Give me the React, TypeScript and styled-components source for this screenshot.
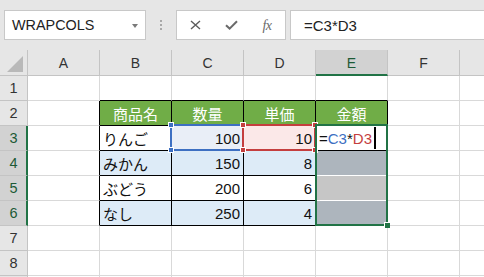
import React from 'react';
import styled, { createGlobalStyle } from 'styled-components';

const GRID = '#d9d9d9';
const INK = '#000';
const HEAD_LINE = '#c4c4c4';
const SEL_GREEN = '#217346';
const REF_BLUE = '#3d6fc2';
const REF_RED = '#c43e3e';
const LIGHT_BLUE = '#ddebf7';
const TABLE_GREEN = '#70ad47';

const Global = createGlobalStyle`
  html, body { margin: 0; padding: 0; background: #fff; }
  body {
    width: 484px;
    height: 277px;
    overflow: hidden;
    font-family: "Liberation Sans", "Noto Sans CJK JP", sans-serif;
  }
`;

const Page = styled.div`
  display: flex;
  flex-direction: column;
  width: 484px;
  height: 277px;
  overflow: hidden;
  background: #fff;
`;

/* ---------- formula toolbar ---------- */

const Toolbar = styled.div`
  display: flex;
  align-items: flex-start;
  flex: 0 0 50px;
  box-sizing: border-box;
  padding: 10px 0 0 4px;
  background: #e6e6e6;
`;

const NameBox = styled.div`
  display: flex;
  align-items: center;
  justify-content: space-between;
  flex: 0 0 142px;
  height: 30px;
  box-sizing: border-box;
  padding: 0 7px 0 7px;
  background: #fff;
  border: 1px solid #c8c8c8;
  font-size: 14.4px;
  color: #222;
`;

const DropArrow = styled.span`
  width: 0;
  height: 0;
  border-left: 3.5px solid transparent;
  border-right: 3.5px solid transparent;
  border-top: 4px solid #7a7a7a;
  margin-top: 1px;
`;

const Grip = styled.div`
  flex: 0 0 30px;
  height: 30px;
  display: flex;
  flex-direction: column;
  align-items: center;
  justify-content: center;
  gap: 2px;
`;

const GripDot = styled.span`
  width: 2px;
  height: 2px;
  background: #a8a8a8;
`;

const ButtonBox = styled.div`
  display: grid;
  grid-template-columns: repeat(3, 36px);
  flex: 0 0 109px;
  height: 30px;
  box-sizing: border-box;
  background: #fff;
  border: 1px solid #c8c8c8;
`;

const ToolButton = styled.span`
  display: flex;
  align-items: center;
  justify-content: center;
`;

const Fx = styled.span`
  font-family: "Liberation Serif", "DejaVu Serif", serif;
  font-style: italic;
  font-size: 14px;
  color: #6a6a6a;
  letter-spacing: -0.5px;
  margin-top: 1px;
`;

const FormulaInput = styled.div`
  flex: 1;
  height: 30px;
  margin-left: 4px;
  box-sizing: border-box;
  display: flex;
  align-items: center;
  padding-left: 13px;
  background: #fff;
  border: 1px solid #c8c8c8;
  border-right: none;
  font-size: 15px;
  color: #222;
`;

/* ---------- sheet grid ---------- */

const Sheet = styled.div`
  display: grid;
  grid-template-columns: 28px repeat(7, 72px);
  grid-template-rows: 26px repeat(9, 25px);
`;

const Corner = styled.div`
  position: relative;
  box-sizing: border-box;
  background: #e6e6e6;
  border-right: 1px solid ${HEAD_LINE};
  border-bottom: 1px solid ${HEAD_LINE};
  display: flex;
  align-items: flex-end;
  justify-content: flex-end;
  padding: 0 4px 3px 0;
`;

const CornerTriangle = styled.span`
  width: 0;
  height: 0;
  border-left: 16px solid transparent;
  border-bottom: 16px solid #b9b9b9;
`;

const ColHeader = styled.div<{ $selected?: boolean }>`
  box-sizing: border-box;
  display: flex;
  align-items: center;
  justify-content: center;
  background: ${p => (p.$selected ? '#d2d2d2' : '#e6e6e6')};
  border-right: 1px solid ${HEAD_LINE};
  border-bottom: ${p => (p.$selected ? `2px solid ${SEL_GREEN}` : `1px solid ${HEAD_LINE}`)};
  padding-top: ${p => (p.$selected ? '1px' : '0')};
  font-size: 14px;
  color: ${p => (p.$selected ? '#1d5a36' : '#333')};
`;

const RowHeader = styled.div<{ $selected?: boolean }>`
  box-sizing: border-box;
  display: flex;
  align-items: center;
  justify-content: center;
  background: ${p => (p.$selected ? '#d2d2d2' : '#e6e6e6')};
  border-right: ${p => (p.$selected ? `2px solid ${SEL_GREEN}` : `1px solid ${HEAD_LINE}`)};
  border-bottom: 1px solid ${HEAD_LINE};
  padding-left: ${p => (p.$selected ? '1px' : '0')};
  font-size: 14.5px;
  color: ${p => (p.$selected ? '#1d5a36' : '#333')};
`;

type Align = 'left' | 'right' | 'center';

const Cell = styled.div<{
  $fill: string;
  $rb: string;
  $bb: string;
  $align: Align;
  $color: string;
}>`
  position: relative;
  box-sizing: border-box;
  min-width: 0;
  display: flex;
  align-items: center;
  justify-content: ${p =>
    p.$align === 'right' ? 'flex-end' : p.$align === 'center' ? 'center' : 'flex-start'};
  padding: 0 3px 0 3px;
  background: ${p => p.$fill};
  border-right: 1px solid ${p => p.$rb};
  border-bottom: 1px solid ${p => p.$bb};
  font-size: 15px;
  color: ${p => p.$color};
  white-space: nowrap;
`;

const RefBox = styled.div<{ $color: string }>`
  position: absolute;
  top: -2px;
  left: -2px;
  right: -1px;
  bottom: -1px;
  border: 2px solid ${p => p.$color};
  pointer-events: none;
  z-index: 2;
`;

const Handle = styled.span<{ $color: string; $x: 'l' | 'r'; $y: 't' | 'b' }>`
  position: absolute;
  width: 6px;
  height: 6px;
  box-sizing: border-box;
  background: ${p => p.$color};
  border: 1px solid #fff;
  ${p => (p.$x === 'l' ? 'left: -4px;' : 'right: -4px;')}
  ${p => (p.$y === 't' ? 'top: -4px;' : 'bottom: -4px;')}
`;

const SelectionBox = styled.div`
  position: absolute;
  top: -2px;
  left: -1px;
  width: 73px;
  height: 102px;
  box-sizing: border-box;
  border: 2px solid ${SEL_GREEN};
  pointer-events: none;
  z-index: 3;
`;

const FillHandle = styled.span`
  position: absolute;
  right: -4px;
  bottom: -4px;
  width: 6px;
  height: 6px;
  box-sizing: border-box;
  background: ${SEL_GREEN};
  border-top: 1px solid #fff;
  border-left: 1px solid #fff;
`;

const Ref = styled.span<{ $color: string }>`
  color: ${p => p.$color};
`;

const Caret = styled.span`
  display: inline-block;
  width: 2px;
  height: 22px;
  margin-left: 2px;
  background: #000;
`;

const RefOutline: React.FC<{ color: string }> = ({ color }) => (
  <RefBox $color={color}>
    <Handle $color={color} $x="l" $y="t" />
    <Handle $color={color} $x="r" $y="t" />
    <Handle $color={color} $x="l" $y="b" />
    <Handle $color={color} $x="r" $y="b" />
  </RefBox>
);

/* ---------- data ---------- */

type CellSpec = {
  text?: React.ReactNode;
  align?: Align;
  fill?: string;
  color?: string;
  rb?: string;
  bb?: string;
  overlay?: React.ReactNode;
};

// the last column (G) and row (9) are only partly in view, so no labels show
const COLS = ['A', 'B', 'C', 'D', 'E', 'F', ''];
const ROWS = [1, 2, 3, 4, 5, 6, 7, 8, 0];

const products: { name: string; qty: number; price: number }[] = [
  { name: 'りんご', qty: 100, price: 10 },
  { name: 'みかん', qty: 150, price: 8 },
  { name: 'ぶどう', qty: 200, price: 6 },
  { name: 'なし', qty: 250, price: 4 },
];

const headers = ['商品名', '数量', '単価', '金額'];

function cellFor(row: number, col: number): CellSpec {
  const spec: CellSpec = {};
  const inTableRows = row >= 2 && row <= 6;
  const inTableCols = col >= 1 && col <= 4;

  if (inTableRows && col >= 0 && col <= 4) spec.rb = INK;
  if (row >= 1 && row <= 6 && inTableCols) spec.bb = INK;

  if (row === 2 && inTableCols) {
    spec.text = headers[col - 1];
    spec.align = 'center';
    spec.fill = TABLE_GREEN;
    spec.color = '#fff';
  }

  if (row >= 3 && row <= 6 && inTableCols) {
    const p = products[row - 3];
    const striped = row === 4 || row === 6;
    if (striped) spec.fill = LIGHT_BLUE;
    if (col === 1) spec.text = p.name;
    if (col === 2) {
      spec.text = String(p.qty);
      spec.align = 'right';
    }
    if (col === 3) {
      spec.text = String(p.price);
      spec.align = 'right';
    }
    if (col === 4) {
      if (row === 3) {
        spec.fill = '#fff';
        spec.text = (
          <>
            =<Ref $color={REF_BLUE}>C3</Ref>*<Ref $color={REF_RED}>D3</Ref>
            <Caret />
          </>
        );
        spec.overlay = (
          <SelectionBox>
            <FillHandle />
          </SelectionBox>
        );
      } else {
        spec.fill = striped ? '#adb5bd' : '#c6c6c6';
        spec.bb = '#fff';
      }
    }
  }

  if (row === 3 && col === 2) {
    spec.fill = '#e9eef7';
    spec.overlay = <RefOutline color={REF_BLUE} />;
  }
  if (row === 3 && col === 3) {
    spec.fill = '#fbe8e8';
    spec.overlay = <RefOutline color={REF_RED} />;
  }
  return spec;
}

const CrossIcon = () => (
  <svg width="11" height="10" viewBox="0 0 11 10">
    <path d="M1 1 L10 9 M10 1 L1 9" stroke="#5c5c5c" strokeWidth="1.4" fill="none" />
  </svg>
);

const CheckIcon = () => (
  <svg width="13" height="10" viewBox="0 0 13 10">
    <path d="M1 5.2 L4.6 8.6 L12 1.2" stroke="#6a6a6a" strokeWidth="2" fill="none" />
  </svg>
);

export default function App() {
  return (
    <Page>
      <Global />
      <Toolbar>
        <NameBox>
          <span>WRAPCOLS</span>
          <DropArrow />
        </NameBox>
        <Grip>
          <GripDot />
          <GripDot />
          <GripDot />
        </Grip>
        <ButtonBox>
          <ToolButton>
            <CrossIcon />
          </ToolButton>
          <ToolButton>
            <CheckIcon />
          </ToolButton>
          <ToolButton>
            <Fx>fx</Fx>
          </ToolButton>
        </ButtonBox>
        <FormulaInput>=C3*D3</FormulaInput>
      </Toolbar>
      <Sheet>
        <Corner>
          <CornerTriangle />
        </Corner>
        {COLS.map((c, i) => (
          <ColHeader key={i} $selected={c === 'E'}>
            {c}
          </ColHeader>
        ))}
        {ROWS.map((r, ri) => (
          <React.Fragment key={ri}>
            <RowHeader $selected={r >= 3 && r <= 6}>{r || ''}</RowHeader>
            {COLS.map((_, ci) => {
              const s = cellFor(r, ci);
              return (
                <Cell
                  key={ci}
                  $fill={s.fill ?? '#fff'}
                  $rb={s.rb ?? GRID}
                  $bb={s.bb ?? GRID}
                  $align={s.align ?? 'left'}
                  $color={s.color ?? '#111'}
                >
                  {s.text}
                  {s.overlay}
                </Cell>
              );
            })}
          </React.Fragment>
        ))}
      </Sheet>
    </Page>
  );
}
